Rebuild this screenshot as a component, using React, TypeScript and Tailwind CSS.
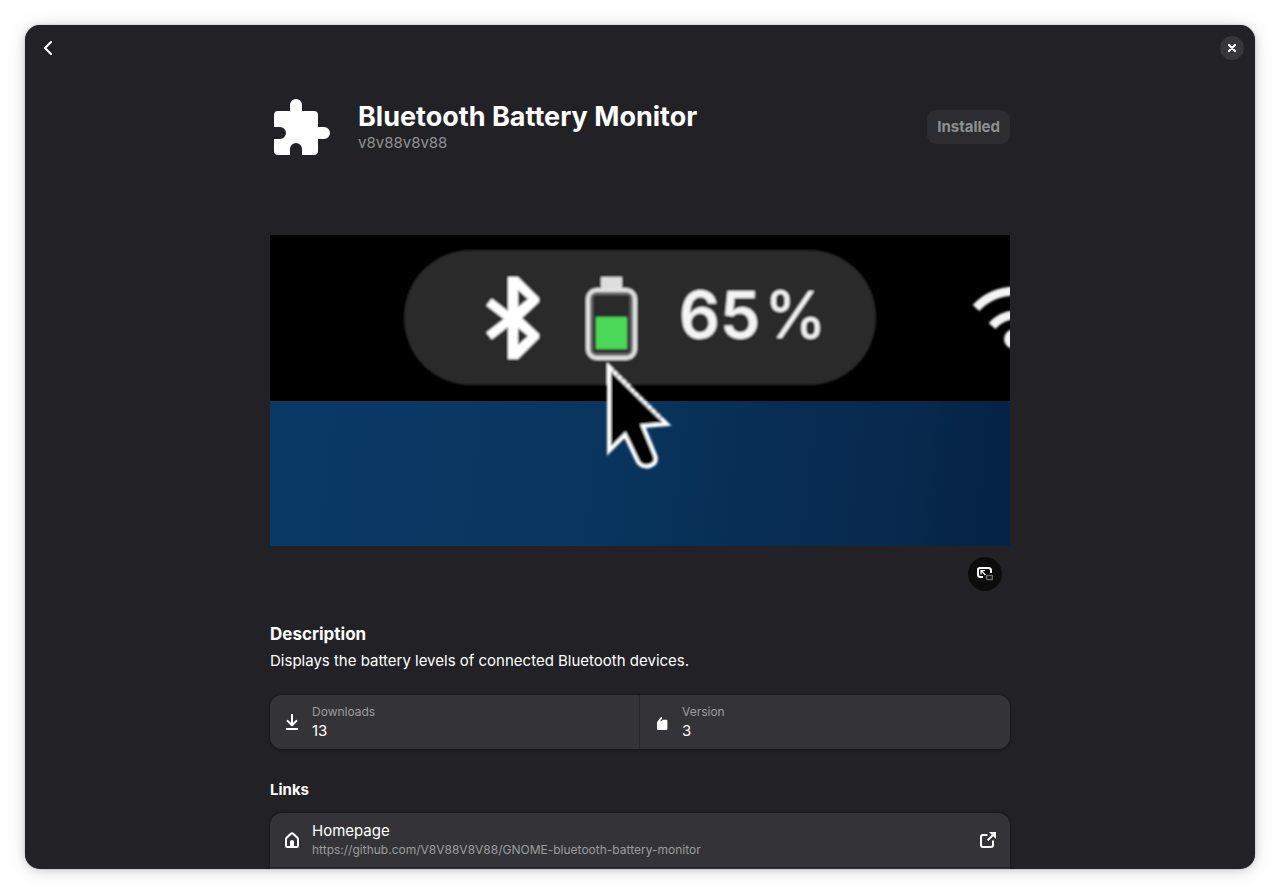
import type { ReactNode } from "react";

type RowProps = {
  icon: ReactNode;
  children: ReactNode;
};

const DownloadIcon = () => (
  <svg viewBox="0 0 16 16" className="size-4 shrink-0" fill="none" stroke="currentColor" strokeWidth="2" aria-hidden="true">
    <path d="M8 0v11" />
    <path d="M3.6 6.9 8 11.3l4.4-4.4" strokeLinecap="round" strokeLinejoin="round" />
    <path d="M2 15h12" />
  </svg>
);

const VersionIcon = () => (
  <svg viewBox="0 0 16 16" className="size-4 shrink-0" fill="currentColor" aria-hidden="true">
    <path d="M3 8.2 6.6 3.6Q7.1 3 8 3v1.6L6.2 7.2h1.2l1.4-1.4h3.7q.9 0 .9.9v8.4q0 .9-.9.9H3.9q-.9 0-.9-.9z" />
  </svg>
);

const HomeIcon = () => (
  <svg viewBox="0 0 16 16" className="size-4 shrink-0" aria-hidden="true">
    <path
      d="M2 7.2q0-.8.6-1.4L6.9 1.7q1.1-1 2.2 0l4.3 4.1q.6.6.6 1.4v6.3q0 1.5-1.5 1.5h-9Q2 15 2 13.5z"
      fill="none"
      stroke="currentColor"
      strokeWidth="2"
    />
    <path d="M6 15V10q0-2 2-2t2 2v5z" fill="currentColor" />
  </svg>
);

const ExternalIcon = () => (
  <svg viewBox="0 0 16 16" className="size-4 shrink-0" aria-hidden="true">
    <path
      d="M7.5 3H3Q1 3 1 5v8q0 2 2 2h8q2 0 2-2V8.500M7.600 8.400 13 3"
      fill="none"
      stroke="currentColor"
      strokeWidth="2"
    />
    <path d="M9 0H16v7L13.700 4.700 11.300 2.300z" fill="currentColor" />
  </svg>
);

const PuzzleIcon = () => (
  <svg viewBox="0 0 64 64" className="size-16 shrink-0" fill="currentColor" aria-hidden="true">
    <path d="M20 16V10a6 6 0 0 1 12 0v6h12a4 4 0 0 1 4 4v12h6a6 6 0 0 1 0 12h-6v12a4 4 0 0 1-4 4H32v-6a6 6 0 0 0-12 0v6H8a4 4 0 0 1-4-4V44h6a6 6 0 0 0 0-12H4V20a4 4 0 0 1 4-4z" />
  </svg>
);

// Magnified top bar with the battery indicator and a pointer below it
const Preview = () => (
  <svg viewBox="0 0 740 311" className="block w-full" role="img" aria-label="Battery indicator in the top bar">
    <defs>
      <linearGradient id="desk" x1="0" y1="0" x2="1" y2="0.05">
        <stop offset="0" stopColor="#0b3966" />
        <stop offset="0.35" stopColor="#0a3762" />
        <stop offset="0.55" stopColor="#08335b" />
        <stop offset="0.7" stopColor="#082d54" />
        <stop offset="0.9" stopColor="#08294d" />
        <stop offset="1" stopColor="#052345" />
      </linearGradient>
      <filter id="soft" x="-5%" y="-5%" width="110%" height="110%">
        <feGaussianBlur stdDeviation="1.3" />
      </filter>
    </defs>
    <rect width="740" height="311" fill="url(#desk)" />
    <rect width="740" height="166" fill="#000" />
    <g filter="url(#soft)">
      <rect x="134" y="15" width="472" height="135" rx="67" fill="#2c2c2c" />
      <path
        fillRule="evenodd"
        fill="#fff"
        d="M238 42h10l21 21v4l-17 16 17 16v4l-21 21h-10zM248 55v17l10-8zM248 93v17l10-9z"
      />
      <path d="m219 67 22 17-22 17" fill="none" stroke="#fff" strokeWidth="9" />
      <rect x="331" y="42" width="21" height="13" fill="#dedede" />
      <rect x="321" y="58" width="41" height="62" rx="5" fill="none" stroke="#6a6a6a" strokeWidth="4" />
      <rect x="318" y="55" width="47" height="68" rx="9" fill="none" stroke="#e2e2e2" strokeWidth="4" />
      <rect x="326" y="82" width="31" height="32" fill="#4bd859" />
      <text x="409" y="103" fill="#f4f4f4" className="font-['Inter',sans-serif] text-[64px] font-semibold">
        65
      </text>
      <text x="494" y="103" fill="#f4f4f4" className="font-['Inter',sans-serif] text-[64px]">
        %
      </text>
      <path d="M706 73Q722 56 746 56M722 91Q732 80 746 80" fill="none" stroke="#f4f4f4" strokeWidth="9" />
      <circle cx="744" cy="104" r="10" fill="#f4f4f4" />
      <path
        d="M339 132v84l16-16 13 27q4 6 12 4 8-3 5-11l-12-29 24-2z"
        fill="#000"
        stroke="#fff"
        strokeWidth="4"
      />
      <path d="m343 135 50 49" stroke="#000" strokeOpacity="0.35" strokeWidth="3" strokeDasharray="2 4" />
    </g>
  </svg>
);

const StatCell = ({ icon, children }: RowProps) => (
  <div className="flex items-center gap-3 px-3.5 py-2">
    {icon}
    <dl className="min-w-0">{children}</dl>
  </div>
);

const stats = [
  { label: "Downloads", value: "13", icon: <DownloadIcon /> },
  { label: "Version", value: "3", icon: <VersionIcon /> },
];

const links = [{ title: "Homepage", url: "https://github.com/V8V88V8V88/GNOME-bluetooth-battery-monitor" }];

export default function App() {
  return (
    <div className="h-screen bg-white p-[25px] font-['Inter',sans-serif] text-[15px] leading-5 text-white">
      <div className="flex h-full flex-col overflow-hidden rounded-[15px] bg-[#222226] shadow-[0_0_1px_rgba(0,0,0,0.5),0_1px_8px_rgba(0,0,0,0.16),0_2px_22px_rgba(0,0,0,0.1)]">
        {/* Header bar */}
        <header className="flex shrink-0 items-center justify-between p-1.5">
          <button type="button" aria-label="Back" className="flex size-[34px] items-center justify-center">
            <svg viewBox="0 0 16 16" className="size-4" fill="none" stroke="currentColor" strokeWidth="2" strokeLinecap="round" strokeLinejoin="round">
              <path d="M11 2 5 8l6 6" />
            </svg>
          </button>
          <button type="button" aria-label="Close" className="flex size-[34px] items-center justify-center">
            <span className="flex size-6 items-center justify-center rounded-full bg-[#38383b]">
              <svg viewBox="0 0 16 16" className="size-4" fill="none" stroke="currentColor" strokeWidth="2.2" strokeLinecap="round">
                <path d="m5 5 6 6M11 5l-6 6" />
              </svg>
            </span>
          </button>
        </header>

        <main className="min-h-0 flex-1 overflow-hidden">
          <div className="mx-auto max-w-[740px] pt-6">
            {/* Title */}
            <div className="flex items-center gap-6">
              <PuzzleIcon />
              <div className="min-w-0 flex-1">
                <h1 className="text-[27px] leading-8 font-bold">Bluetooth Battery Monitor</h1>
                <p className="text-[#919193]">v8v88v8v88</p>
              </div>
              <button type="button" disabled className="rounded-[9px] bg-[#2d2d31] px-2.5 py-[7px] font-bold text-[#8f8f91]">
                Installed
              </button>
            </div>

            {/* Screenshot */}
            <div className="mt-[76px]">
              <Preview />
              <div className="mt-[11px] flex justify-end pr-2">
                <button type="button" aria-label="Enlarge" className="flex size-[34px] items-center justify-center rounded-full bg-[#0c0c0d]">
                  <svg viewBox="0 0 16 16" className="size-4" fill="none" stroke="currentColor">
                    <path d="M6 11H3.500Q1 11 1 8.500v-5Q1 2 3 2h8.500Q14 2 14 4.500V7" strokeWidth="2" />
                    <path d="M4 8.500V4.500h4M4.500 5l4 4" strokeWidth="1.200" />
                    <rect x="9.500" y="9.500" width="6" height="4" rx="1" stroke="#6c6c6e" strokeWidth="1.600" />
                  </svg>
                </button>
              </div>
            </div>

            {/* Description */}
            <h2 className="mt-[30px] text-[17px] leading-[26px] font-bold">Description</h2>
            <p className="mt-1">Displays the battery levels of connected Bluetooth devices.</p>

            <div className="mt-6 grid grid-cols-2 divide-x divide-[#26262a] rounded-xl bg-[#343438] shadow-[0_0_0_1px_rgba(0,0,6,0.12),0_1px_3px_1px_rgba(0,0,6,0.2)]">
              {stats.map((s) => (
                <StatCell key={s.label} icon={s.icon}>
                  <dt className="text-[12px] leading-[18px] text-[#9c9c9e]">{s.label}</dt>
                  <dd>{s.value}</dd>
                </StatCell>
              ))}
            </div>

            {/* Links */}
            <h2 className="mt-[31px] mb-[13px] font-bold">Links</h2>
            <ul className="divide-y divide-[#26262a] rounded-xl bg-[#343438] shadow-[0_0_0_1px_rgba(0,0,6,0.12),0_1px_3px_1px_rgba(0,0,6,0.2)]">
              {links.map((l) => (
                <li key={l.url}>
                  <a href={l.url} className="flex items-center gap-3 px-3.5 py-2">
                    <HomeIcon />
                    <span className="flex min-w-0 flex-1 flex-col">
                      <span>{l.title}</span>
                      <span className="text-[12px] leading-[18px] text-[#9c9c9e]">{l.url}</span>
                    </span>
                    <ExternalIcon />
                  </a>
                </li>
              ))}
              <li className="h-14" />
            </ul>
          </div>
        </main>
      </div>
    </div>
  );
}
